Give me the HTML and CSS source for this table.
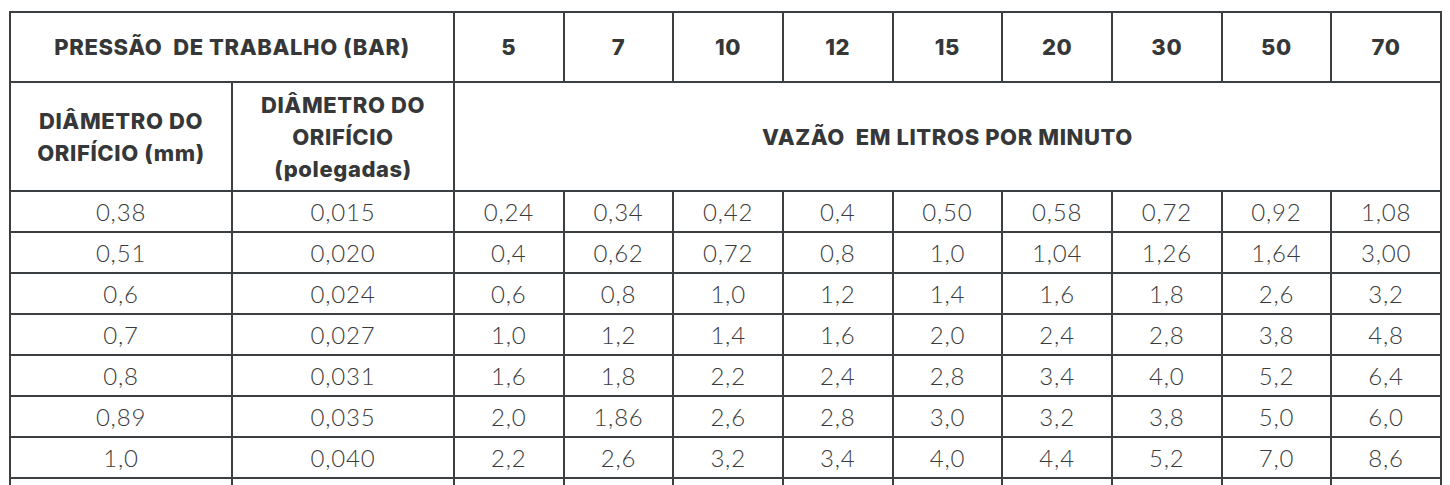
FILE: index.html
```html
<!DOCTYPE html>
<html lang="pt">
<head>
<meta charset="utf-8">
<title>Tabela de vazão</title>
<link rel="stylesheet" href="styles.css">
</head>
<body>
<table class="flow">
  <colgroup>
    <col class="c-wide"><col class="c-wide">
    <col class="c-n"><col class="c-n"><col class="c-n"><col class="c-n"><col class="c-n"><col class="c-n"><col class="c-n"><col class="c-n"><col class="c-n">
  </colgroup>
  <thead>
    <tr class="r-press">
      <th colspan="2" class="h-press">PRESSÃO&nbsp; DE TRABALHO (BAR)</th>
      <th class="h-num">5</th><th class="h-num">7</th><th class="h-num">10</th><th class="h-num">12</th><th class="h-num">15</th><th class="h-num">20</th><th class="h-num">30</th><th class="h-num">50</th><th class="h-num">70</th>
    </tr>
    <tr class="r-sub">
      <th class="h-sub">DIÂMETRO DO<br>ORIFÍCIO (mm)</th>
      <th class="h-sub">DIÂMETRO DO<br>ORIFÍCIO<br>(polegadas)</th>
      <th colspan="9" class="h-flow">VAZÃO&nbsp; EM LITROS POR MINUTO</th>
    </tr>
  </thead>
  <tbody>
    <tr><td>0,38</td><td>0,015</td><td>0,24</td><td>0,34</td><td>0,42</td><td>0,4</td><td>0,50</td><td>0,58</td><td>0,72</td><td>0,92</td><td>1,08</td></tr>
    <tr><td>0,51</td><td>0,020</td><td>0,4</td><td>0,62</td><td>0,72</td><td>0,8</td><td>1,0</td><td>1,04</td><td>1,26</td><td>1,64</td><td>3,00</td></tr>
    <tr><td>0,6</td><td>0,024</td><td>0,6</td><td>0,8</td><td>1,0</td><td>1,2</td><td>1,4</td><td>1,6</td><td>1,8</td><td>2,6</td><td>3,2</td></tr>
    <tr><td>0,7</td><td>0,027</td><td>1,0</td><td>1,2</td><td>1,4</td><td>1,6</td><td>2,0</td><td>2,4</td><td>2,8</td><td>3,8</td><td>4,8</td></tr>
    <tr><td>0,8</td><td>0,031</td><td>1,6</td><td>1,8</td><td>2,2</td><td>2,4</td><td>2,8</td><td>3,4</td><td>4,0</td><td>5,2</td><td>6,4</td></tr>
    <tr><td>0,89</td><td>0,035</td><td>2,0</td><td>1,86</td><td>2,6</td><td>2,8</td><td>3,0</td><td>3,2</td><td>3,8</td><td>5,0</td><td>6,0</td></tr>
    <tr><td>1,0</td><td>0,040</td><td>2,2</td><td>2,6</td><td>3,2</td><td>3,4</td><td>4,0</td><td>4,4</td><td>5,2</td><td>7,0</td><td>8,6</td></tr>
    <tr><td></td><td></td><td></td><td></td><td></td><td></td><td></td><td></td><td></td><td></td><td></td></tr>
  </tbody>
</table>
</body>
</html>
```

FILE: styles.css
```css
html, body {
  margin: 0;
  padding: 0;
  background: #ffffff;
}
body {
  padding: 11px 0 0 9px;
}
.flow {
  border-collapse: collapse;
  table-layout: fixed;
  width: 1431px;
  color: #3a3b3d;
}
.c-wide { width: 222px; }
.c-n { width: 109.67px; }
.flow th, .flow td {
  border: 2px solid #3c3f42;
  text-align: center;
  vertical-align: middle;
  padding: 0;
}
.flow th {
  font-family: "Inter", "Noto Sans", sans-serif;
  font-weight: 800;
  font-size: 22px;
  letter-spacing: 0.6px;
  line-height: 32px;
  color: #363739;
}
.r-press th { height: 68px; }
.r-sub th { height: 107px; }
.h-press { letter-spacing: 1.2px; }
.h-num { font-size: 23px; letter-spacing: 2px; }
.h-flow { letter-spacing: 0.2px; }
.flow td {
  font-family: "Lato", "Open Sans", sans-serif;
  font-weight: 300;
  font-size: 24px;
  letter-spacing: 0.8px;
  height: 39px;
  line-height: 26px;
}
```
